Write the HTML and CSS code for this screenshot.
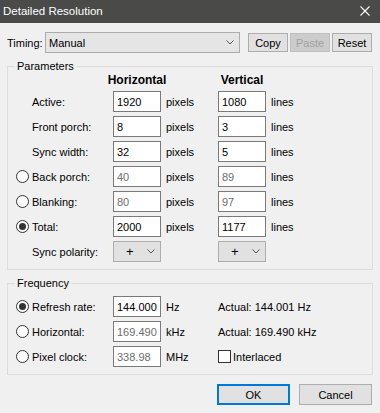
FILE: index.html
```html
<!doctype html>
<html>
<head>
<meta charset="UTF-8">
<title>Detailed Resolution</title>
<link rel="stylesheet" href="styles.css">
</head>
<body>
<div class="dialog">
	<div class="titlebar">
		<span class="title">Detailed Resolution</span>
		<svg class="close" width="10" height="10" viewBox="0 0 10 10"><path d="M0.5 0.5L9.5 9.5M9.5 0.5L0.5 9.5" stroke="#fff" stroke-width="1.1" fill="none"/></svg>
	</div>

	<div class="timing_row">
		<span class="timing_label">Timing:</span>
		<div class="combo">
			<span>Manual</span>
			<svg class="chev" width="8" height="5" viewBox="0 0 8 5"><path d="M0.5 0.5L4 4L7.5 0.5" stroke="#555" fill="none"/></svg>
		</div>
		<button type="button" class="btn small">Copy</button>
		<button type="button" class="btn small" disabled>Paste</button>
		<button type="button" class="btn small">Reset</button>
	</div>

	<fieldset class="group params">
		<legend>Parameters</legend>
		<div class="grid">
			<span></span><b class="head">Horizontal</b><span></span><b class="head">Vertical</b><span></span>

			<label class="lbl">Active:</label>
			<input class="field" value="1920"><span class="unit">pixels</span>
			<input class="field" value="1080"><span class="unit">lines</span>

			<label class="lbl">Front porch:</label>
			<input class="field" value="8"><span class="unit">pixels</span>
			<input class="field" value="3"><span class="unit">lines</span>

			<label class="lbl">Sync width:</label>
			<input class="field" value="32"><span class="unit">pixels</span>
			<input class="field" value="5"><span class="unit">lines</span>

			<label class="lbl radio_lbl"><span class="radio"></span>Back porch:</label>
			<input class="field off" value="40" readonly><span class="unit">pixels</span>
			<input class="field off" value="89" readonly><span class="unit">lines</span>

			<label class="lbl radio_lbl"><span class="radio"></span>Blanking:</label>
			<input class="field off" value="80" readonly><span class="unit">pixels</span>
			<input class="field off" value="97" readonly><span class="unit">lines</span>

			<label class="lbl radio_lbl"><span class="radio on"></span>Total:</label>
			<input class="field" value="2000"><span class="unit">pixels</span>
			<input class="field" value="1177"><span class="unit">lines</span>

			<label class="lbl">Sync polarity:</label>
			<div class="pol"><span>+</span><svg class="chev" width="8" height="5" viewBox="0 0 8 5"><path d="M0.5 0.5L4 4L7.5 0.5" stroke="#555" fill="none"/></svg></div><span></span>
			<div class="pol"><span>+</span><svg class="chev" width="8" height="5" viewBox="0 0 8 5"><path d="M0.5 0.5L4 4L7.5 0.5" stroke="#555" fill="none"/></svg></div><span></span>
		</div>
	</fieldset>

	<fieldset class="group freq">
		<legend>Frequency</legend>
		<div class="grid">
			<label class="lbl radio_lbl"><span class="radio on"></span>Refresh rate:</label>
			<input class="field" value="144.000"><span class="unit">Hz</span>
			<span class="actual">Actual: 144.001 Hz</span>

			<label class="lbl radio_lbl"><span class="radio"></span>Horizontal:</label>
			<input class="field off" value="169.490" readonly><span class="unit">kHz</span>
			<span class="actual">Actual: 169.490 kHz</span>

			<label class="lbl radio_lbl"><span class="radio"></span>Pixel clock:</label>
			<input class="field off" value="338.98" readonly><span class="unit">MHz</span>
			<label class="actual"><span class="check"></span>Interlaced</label>
		</div>
	</fieldset>

	<div class="footer">
		<button type="button" class="btn big default">OK</button>
		<button type="button" class="btn big">Cancel</button>
	</div>
</div>
</body>
</html>
```

FILE: styles.css
```css
html, body {
	margin: 0;
	padding: 0;
	background: #f0f0f0;
}
body {
	font-family: "Liberation Sans", Arial, sans-serif;
	font-size: 11px;
	color: #000;
}
.dialog {
	width: 380px;
	height: 413px;
	overflow: hidden;
}

/* title */
.titlebar {
	height: 23px;
	background: #4a4a49;
	display: flex;
	align-items: center;
	justify-content: space-between;
	padding: 0 10px 1px 3px;
	box-sizing: border-box;
}
.title {
	color: #fff;
	font-size: 11.5px;
}
.close {
	display: block;
}

/* timing */
.timing_row {
	display: flex;
	align-items: center;
	height: 21px;
	margin-top: 9px;
	padding-left: 7px;
}
.timing_label {
	width: 38px;
}
.combo {
	width: 195px;
	height: 21px;
	box-sizing: border-box;
	border: 1px solid #acacac;
	background: #e5e5e5;
	display: flex;
	align-items: center;
	justify-content: space-between;
	padding: 0 5px 0 3px;
	margin-right: 8px;
}
.btn {
	font: inherit;
	color: #000;
	background: #e1e1e1;
	border: 1px solid #adadad;
	padding: 0;
	box-sizing: border-box;
}
.btn.small {
	width: 40px;
	height: 19px;
	margin-right: 2px;
}
.btn:disabled {
	background: #cccccc;
	border-color: #bfbfbf;
	color: #a0a0a0;
}
.chev {
	display: block;
}

/* groups */
.group {
	margin: 6px 7px 0;
	padding: 0 0 7px;
	border: 1px solid #dcdcdc;
	min-width: 0;
}
.group legend {
	margin-left: 7px;
	padding: 0 2px;
	line-height: 14px;
}
.grid {
	display: grid;
	grid-template-columns: 105px 48px 57px 48px 1fr;
	grid-auto-rows: 21px;
	row-gap: 4px;
	align-items: center;
}
.params .grid {
	grid-template-rows: 14px;
}
.freq .grid {
	padding-top: 6px;
}
.head {
	font-size: 12px;
	justify-self: center;
	white-space: nowrap;
}
.lbl {
	display: flex;
	align-items: center;
	padding-left: 24px;
	white-space: nowrap;
}
.radio_lbl {
	padding-left: 8px;
}
.radio {
	width: 13px;
	height: 13px;
	box-sizing: border-box;
	border: 1px solid #333;
	border-radius: 50%;
	background: #fff;
	margin-right: 3px;
	position: relative;
}
.radio.on:after {
	content: '';
	position: absolute;
	left: 2px;
	top: 2px;
	width: 7px;
	height: 7px;
	border-radius: 50%;
	background: #333;
}
.field {
	font: inherit;
	width: 48px;
	height: 21px;
	box-sizing: border-box;
	border: 1px solid #7a7a7a;
	background: #fff;
	padding: 0 0 0 3px;
	margin: 0;
	color: #000;
	outline: none;
}
.field.off {
	color: #6d6d6d;
}
.unit {
	padding-left: 5px;
}
.pol {
	width: 48px;
	height: 21px;
	box-sizing: border-box;
	border: 1px solid #adadad;
	background: #e1e1e1;
	display: flex;
	align-items: center;
	justify-content: space-between;
	padding: 0 5px 0 12px;
	font-size: 13px;
}
.actual {
	grid-column: 4 / 6;
	display: flex;
	align-items: center;
	white-space: nowrap;
}
.check {
	width: 13px;
	height: 13px;
	box-sizing: border-box;
	border: 1px solid #333;
	background: #fff;
	margin-right: 2px;
}

/* footer */
.footer {
	display: flex;
	justify-content: flex-end;
	gap: 9px;
	margin: 9px 8px 0 0;
}
.btn.big {
	width: 73px;
	height: 21px;
}
.btn.default {
	border-color: #0078d7;
	box-shadow: inset 0 0 0 1px #0078d7;
}
```
